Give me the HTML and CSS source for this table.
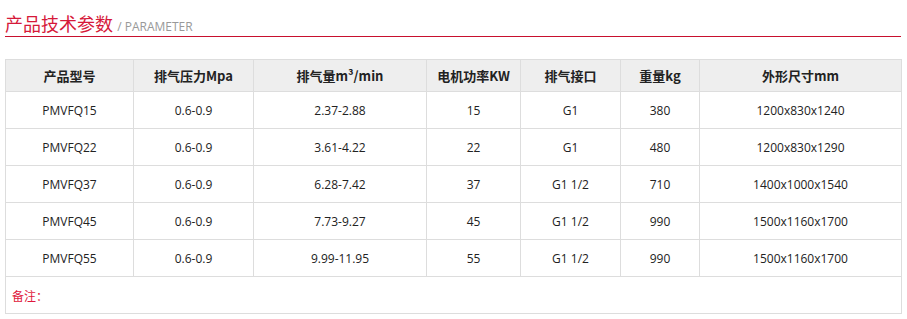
FILE: index.html
```html
<!DOCTYPE html>
<html lang="zh-CN">
<head>
    <meta charset="UTF-8">
    <meta name="viewport" content="width=device-width, initial-scale=1.0">
    <title>产品技术参数</title>
    <link rel="stylesheet" href="styles.css">
</head>
<body>
    <div class="wrap">
        <div class="title">
            <span class="title-cn">产品技术参数</span>
            <span class="title-en">/ PARAMETER</span>
        </div>
        <table class="params">
            <colgroup>
                <col style="width: 128px">
                <col style="width: 120px">
                <col style="width: 173px">
                <col style="width: 94px">
                <col style="width: 100px">
                <col style="width: 79px">
                <col style="width: 202px">
            </colgroup>
            <thead>
                <tr>
                    <th>产品型号</th>
                    <th>排气压力Mpa</th>
                    <th>排气量m³/min</th>
                    <th>电机功率KW</th>
                    <th>排气接口</th>
                    <th>重量kg</th>
                    <th>外形尺寸mm</th>
                </tr>
            </thead>
            <tbody>
                <tr>
                    <td>PMVFQ15</td><td>0.6-0.9</td><td>2.37-2.88</td><td>15</td><td>G1</td><td>380</td><td>1200x830x1240</td>
                </tr>
                <tr>
                    <td>PMVFQ22</td><td>0.6-0.9</td><td>3.61-4.22</td><td>22</td><td>G1</td><td>480</td><td>1200x830x1290</td>
                </tr>
                <tr>
                    <td>PMVFQ37</td><td>0.6-0.9</td><td>6.28-7.42</td><td>37</td><td>G1 1/2</td><td>710</td><td>1400x1000x1540</td>
                </tr>
                <tr>
                    <td>PMVFQ45</td><td>0.6-0.9</td><td>7.73-9.27</td><td>45</td><td>G1 1/2</td><td>990</td><td>1500x1160x1700</td>
                </tr>
                <tr>
                    <td>PMVFQ55</td><td>0.6-0.9</td><td>9.99-11.95</td><td>55</td><td>G1 1/2</td><td>990</td><td>1500x1160x1700</td>
                </tr>
                <tr>
                    <td class="note" colspan="7">备注：</td>
                </tr>
            </tbody>
        </table>
    </div>
</body>
</html>
```

FILE: styles.css
```css
body {
    margin: 0;
    padding: 0;
    background-color: #ffffff;
    font-family: "Open Sans", "Noto Sans CJK SC", sans-serif;
    color: #222;
}

.wrap {
    width: 896px;
    padding: 11px 5px 0 5px;
}

.title {
    border-bottom: 1px solid #c8102e;
    height: 25px;
    line-height: 25px;
    white-space: nowrap;
}

.title-cn {
    font-family: "Noto Sans CJK SC", sans-serif;
    font-size: 18px;
    color: #d6193a;
}

.title-en {
    font-size: 12px;
    color: #999;
}

.params {
    margin-top: 22px;
    width: 896px;
    border-collapse: collapse;
    table-layout: fixed;
    font-size: 12px;
}

.params th,
.params td {
    border: 1px solid #ddd;
    text-align: center;
    padding: 0;
}

.params th {
    height: 31px;
    background-color: #eeeeee;
    font-family: "Noto Sans CJK SC", sans-serif;
    font-size: 13px;
    font-weight: bold;
    color: #222;
}

.params td {
    height: 36px;
}

.params td.note {
    text-align: left;
    padding-left: 6px;
    color: #e0183c;
    font-family: "Noto Sans CJK SC", sans-serif;
}
```
